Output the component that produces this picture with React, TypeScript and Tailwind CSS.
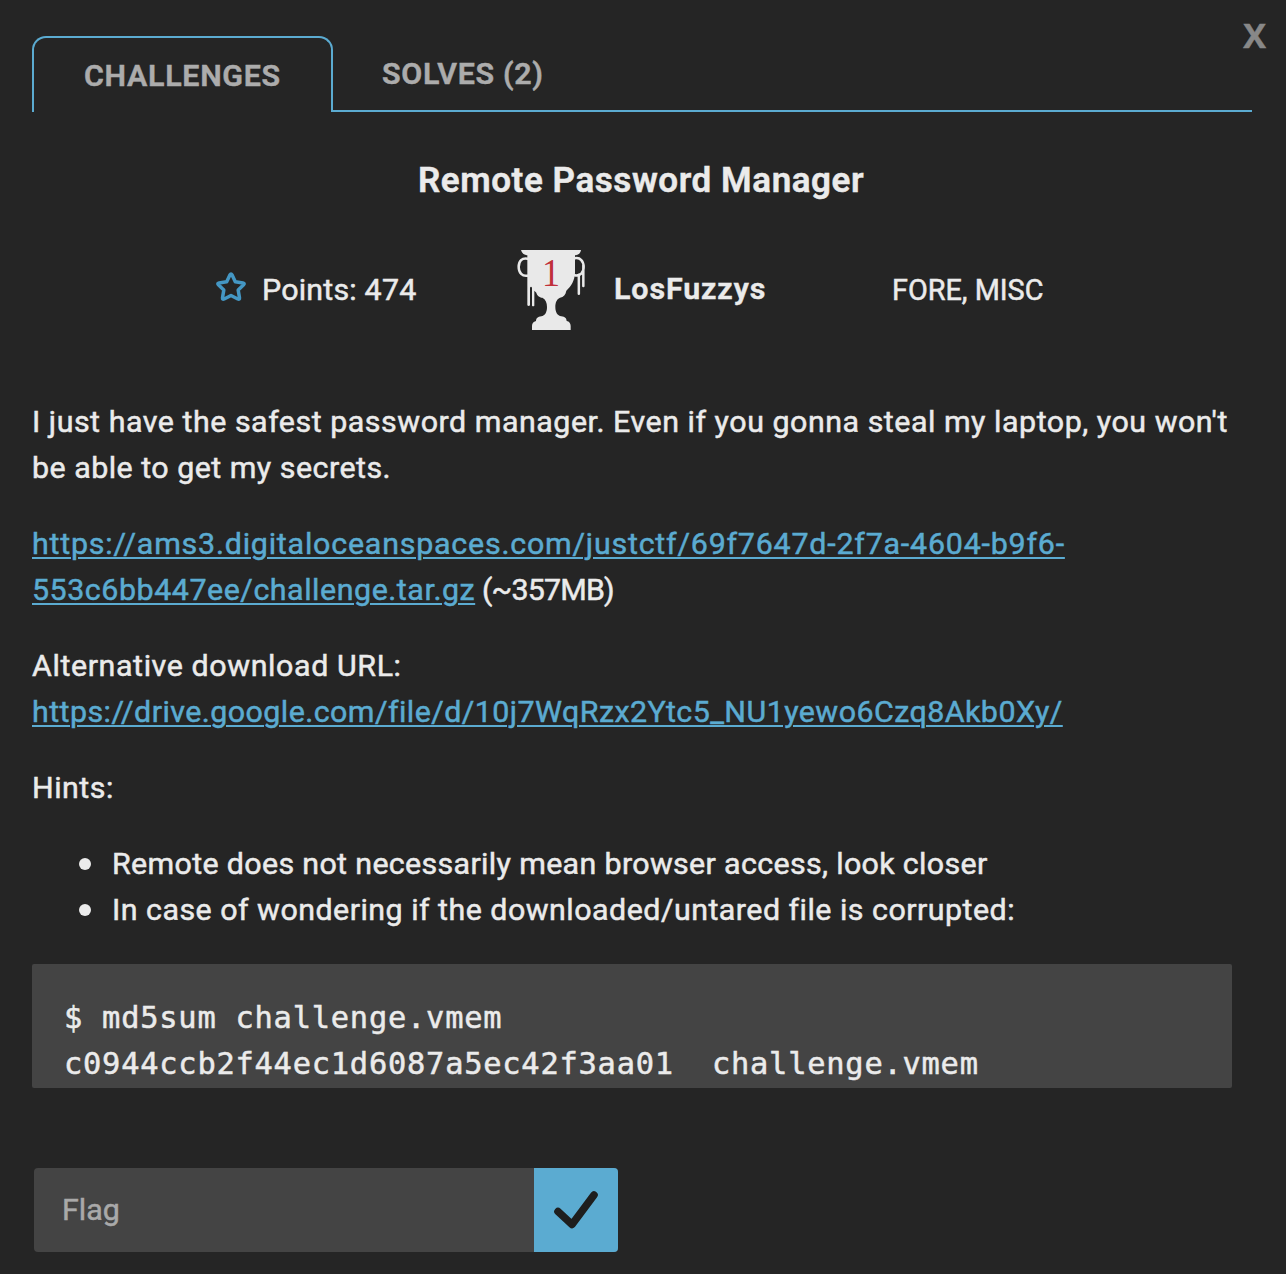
function Trophy() {
  return (
    <svg className="block h-[82px] w-[69px]" viewBox="51 57 207 246" fill="#e9e9e9">
      <path d="M63 60H243C242 69 236 75 225 76V130C223 152 215 168 199 182C197 194 191 201 180 203C169 208 166 219 166 231C166 247 172 257 184 259C195 260 199 265 200 273C208 274 212 281 212 288V300H96V288C96 281 100 275 108 273C109 265 113 260 124 259C135 257 141 247 141 231C141 218 137 208 127 203C118 203 111 196 109 188L103 182V227Q99 231 96 227V173Q93 168 90 173V226Q86 230 82 226V76C72 75 65 69 63 60Z" />
      <path
        d="M83 86C66 82 56 94 56 111C56 128 67 140 83 137M224 85C241 81 251 94 251 111C251 128 241 139 224 136M236.500 134V191M250 104V168"
        fill="none"
        stroke="#e9e9e9"
        strokeWidth="7.500"
        strokeLinecap="round"
      />
      <text x="153" y="168" textAnchor="middle" fontSize="120" fill="#c0303a" stroke="none" className="font-['Liberation_Serif',serif] [-webkit-text-stroke:2px_#c0303a]" textLength="54" lengthAdjust="spacingAndGlyphs">
        1
      </text>
    </svg>
  );
}

function Star() {
  return (
    <svg className="block h-[30px] w-[32px]" viewBox="0 0 32 30" fill="none" stroke="#4497c4" strokeWidth="3.5" strokeLinejoin="round">
      <path d="M14.9 3Q16 1.2 17.1 3L20.3 9.8L28 10.9Q30 11.3 28.6 12.8L23.2 18.1L24.5 25.8Q24.7 27.8 22.8 27L16 23.5L9.2 27Q7.3 27.8 7.5 25.8L8.8 18.1L3.4 12.8Q2 11.3 4 10.9L11.7 9.8Z" />
    </svg>
  );
}

const link = "text-[#5babd1] underline decoration-2 underline-offset-[3px]";

export default function App() {
  return (
    <div className="relative h-[1274px] w-[1286px] overflow-hidden bg-[#252525] font-['Roboto',sans-serif] text-[30.4px] leading-[46px] font-normal whitespace-pre text-[#ebebeb] [-webkit-text-stroke:0.5px]">
      <button className="absolute top-[12px] right-[20px] font-['Open_Sans',sans-serif] text-[34px] leading-[47px] font-bold text-[#888888]">X</button>

      <nav className="ml-8 flex w-[1220px] items-end pt-9 font-semibold text-[#acacac]">
        <div className="h-[76px] w-[301px] rounded-t-[14px] border-2 border-b-0 border-[#5babd1] pt-[15px] pl-[50px] tracking-[0.7px]">CHALLENGES</div>
        <div className="h-[76px] flex-1 border-b-2 border-[#5babd1] pt-[15px] pl-[49px] tracking-[0.7px]">SOLVES (2)</div>
      </nav>

      <h1 className="mt-[46px] pl-[418px] text-[35px] leading-[46px] font-semibold tracking-[0.57px]">Remote Password Manager</h1>

      <div className="mt-[45px] flex h-[82px] items-center">
        <div className="flex w-[517px] items-center pl-[215px]">
          <div className="pb-[7px]">
            <Star />
          </div>
          <span className="pl-[15px] tracking-[0.2px]">Points: 474</span>
        </div>
        <Trophy />
        <span className="w-[306px] pb-[3px] pl-[28px] font-semibold tracking-[0.9px]">LosFuzzys</span>
        <span className="text-[28.8px]">FORE, MISC</span>
      </div>

      <main className="mt-[68px] ml-8 flex w-[1200px] flex-col gap-[30px]">
        <p>
          <span className="block tracking-[0.52px]">I just have the safest password manager. Even if you gonna steal my laptop, you won't</span>
          <span className="block tracking-[0.48px]">be able to get my secrets.</span>
        </p>
        <p>
          <a className={`${link} tracking-[0.79px]`}>https://ams3.digitaloceanspaces.com/justctf/69f7647d-2f7a-4604-b9f6-</a>
          <br />
          <a className={`${link} tracking-[0.54px]`}>553c6bb447ee/challenge.tar.gz</a>
          <span className="tracking-[-0.8px]"> (~357MB)</span>
        </p>
        <p>
          <span className="block tracking-[0.6px]">Alternative download URL:</span>
          <a className={`${link} tracking-[0.45px]`}>https://drive.google.com/file/d/10j7WqRzx2Ytc5_NU1yewo6Czq8Akb0Xy/</a>
        </p>
        <p className="tracking-[0.5px]">Hints:</p>
        <ul>
          <li className="flex items-center tracking-[0.34px]">
            <span className="mr-[21px] ml-[47px] size-3 rounded-full bg-[#ebebeb]" />
            Remote does not necessarily mean browser access, look closer
          </li>
          <li className="flex items-center tracking-[0.48px]">
            <span className="mr-[21px] ml-[47px] size-3 rounded-full bg-[#ebebeb]" />
            In case of wondering if the downloaded/untared file is corrupted:
          </li>
        </ul>
      </main>

      <pre className="mt-[31px] ml-8 h-[124px] w-[1200px] overflow-hidden rounded-[2px] bg-[#444444] px-8 pt-[31px] font-['DejaVu_Sans_Mono',monospace] font-normal tracking-[0.76px]">
        {"$ md5sum challenge.vmem\nc0944ccb2f44ec1d6087a5ec42f3aa01  challenge.vmem"}
      </pre>

      <form className="mt-20 ml-[34px] flex h-[84px] w-[584px] overflow-hidden rounded-[4px] bg-[#444444]">
        <div className="w-[500px] pt-[19px] pl-[28px] text-[#a9a9a9]">Flag</div>
        <button type="button" className="flex size-[84px] items-center justify-center bg-[#5babd1]">
          <svg className="size-[84px]" viewBox="0 0 84 84" fill="none" stroke="#1e1e1e" strokeWidth="7.6" strokeLinecap="round" strokeLinejoin="round">
            <path d="M24 43.5L38 56.5L60 27" />
          </svg>
        </button>
      </form>
    </div>
  );
}
